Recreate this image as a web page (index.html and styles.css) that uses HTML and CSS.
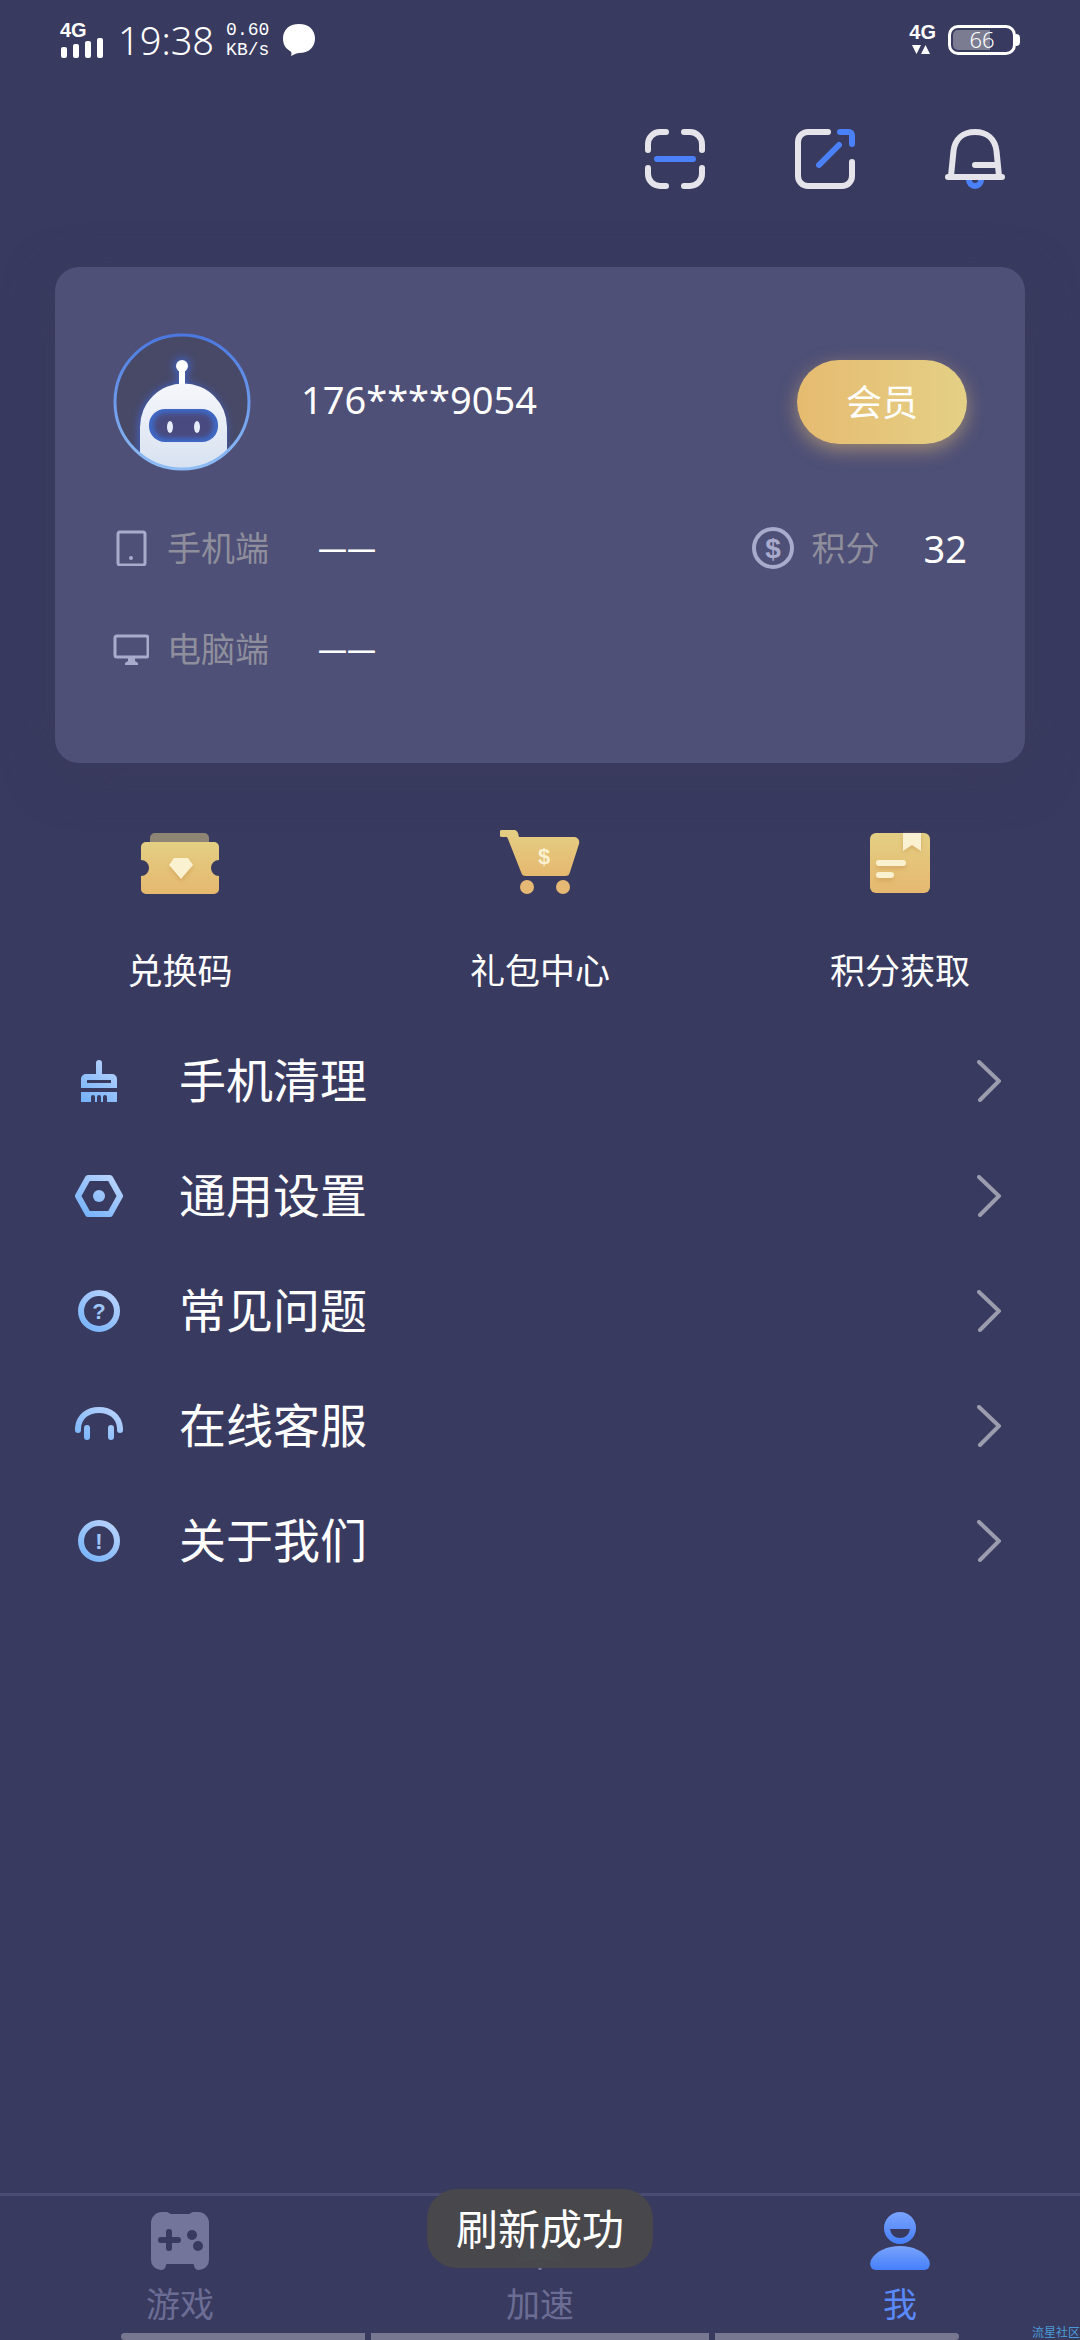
FILE: index.html
```html
<!DOCTYPE html>
<html lang="zh-CN">
<head>
<meta charset="utf-8">
<meta name="viewport" content="width=device-width, initial-scale=1">
<title>我</title>
<link rel="stylesheet" href="styles.css">
</head>
<body>
<svg class="defs" aria-hidden="true">
  <defs>
    <linearGradient id="gold" x1="0" y1="0" x2="0" y2="1"><stop offset="0" stop-color="#e3cf83"/><stop offset="1" stop-color="#e6b86f"/></linearGradient>
    <linearGradient id="sky" gradientUnits="userSpaceOnUse" x1="38" y1="4" x2="10" y2="44"><stop offset="0" stop-color="#b9d3fc"/><stop offset="1" stop-color="#76b3fb"/></linearGradient>
    <linearGradient id="ring" x1="0" y1="0" x2="0" y2="1"><stop offset="0" stop-color="#4a78e0"/><stop offset="1" stop-color="#8fbdf5"/></linearGradient>
    <linearGradient id="shell" x1="0" y1="0" x2="0" y2="1"><stop offset="0" stop-color="#f6f7fb"/><stop offset="1" stop-color="#d5e0f0"/></linearGradient>
    <linearGradient id="person" x1="0" y1="0" x2="0" y2="1"><stop offset="0" stop-color="#7aa3fb"/><stop offset="1" stop-color="#457ffc"/></linearGradient>
    <filter id="glow" x="-30%" y="-30%" width="160%" height="160%"><feGaussianBlur stdDeviation="4"/></filter>
    <filter id="soft" x="-30%" y="-30%" width="160%" height="160%"><feGaussianBlur stdDeviation="2"/></filter>
    <clipPath id="avatar-clip"><circle cx="69" cy="69" r="68"/></clipPath>
  </defs>
</svg>

<header class="status">
  <div class="signal">
    <span class="net">4G</span>
    <svg width="44" height="20" viewBox="0 0 44 20" fill="#fff"><rect x="1" y="9" width="6" height="11" rx="2"/><rect x="13" y="6" width="6" height="14" rx="2"/><rect x="25" y="3" width="6" height="17" rx="2"/><rect x="37" y="0" width="6" height="20" rx="2"/></svg>
  </div>
  <time class="clock">19:38</time>
  <div class="speed"><span>0.60</span><span>KB/s</span></div>
  <svg width="34" height="34" viewBox="0 0 34 34"><path fill="#fff" d="M17 1C27 1 33 7 33 15.500S27 30 17 30c-2 0-4 1-8 3 1-3 .5-4-1-5C3 25 1 21 1 15.500 1 7 7 1 17 1z"/></svg>
  <div class="status-right">
    <div class="signal">
      <span class="net">4G</span>
      <svg class="arrows" width="24" height="14" viewBox="0 0 24 14" fill="#fff"><path d="M3 2h9l-4.500 9zM12 11h9l-4.500-9z"/></svg>
    </div>
    <div class="battery"><span>66</span></div>
  </div>
</header>

<div class="toolbar">
  <button class="tool" aria-label="扫一扫">
    <svg width="60" height="60" viewBox="0 0 60 60" fill="none" stroke="#e4e4ea" stroke-width="6" stroke-linecap="round"><path d="M3 21v-6A12 12 0 0 1 15 3h6M39 3h6a12 12 0 0 1 12 12v6M57 39v6a12 12 0 0 1-12 12h-6M21 57h-6A12 12 0 0 1 3 45v-6"/><path stroke="#4a80f8" d="M12 30h36"/></svg>
  </button>
  <button class="tool" aria-label="分享">
    <svg width="60" height="60" viewBox="0 0 60 60" fill="none" stroke="#e4e4ea" stroke-width="6" stroke-linecap="round"><path d="M33 3H13A10 10 0 0 0 3 13v34a10 10 0 0 0 10 10h34a10 10 0 0 0 10-10V33"/><path stroke="#4a80f8" d="M45 3h9a3 3 0 0 1 3 3v9M24 36l20-20"/></svg>
  </button>
  <button class="tool" aria-label="消息">
    <svg width="60" height="60" viewBox="0 0 60 60" fill="none" stroke="#e4e4ea" stroke-width="6" stroke-linecap="round"><path stroke="#4a80f8" d="M24 51a6 6 0 0 0 12 0"/><path d="M3 48h54M6 47L8.500 22C10 10 18 3 30 3s20 7 21.500 19L54 47M30 36h20"/></svg>
  </button>
</div>

<main>
  <section class="card">
    <div class="profile">
      <svg class="avatar" width="138" height="138" viewBox="0 0 138 138">
        <circle cx="69" cy="69" r="68" fill="#484867"/>
        <g clip-path="url(#avatar-clip)">
          <g fill="#3f64c8" filter="url(#glow)"><circle cx="69" cy="33" r="8"/><path d="M65 34h8v20h-8z"/><path d="M26 142V95a43 44 0 0 1 87 0v47z"/></g>
          <circle cx="69" cy="33" r="6" fill="#fff"/><path d="M66 36h6v18h-6z" fill="#fff"/>
          <path d="M27 142V94a43 43 0 0 1 87 0v48z" fill="url(#shell)"/>
          <rect x="36" y="76" width="69" height="33" rx="16" fill="#3e68c6"/>
          <rect x="41" y="80" width="59" height="25" rx="12" fill="#484c80" filter="url(#soft)"/>
          <ellipse cx="57" cy="94" rx="3" ry="6" fill="#e6ecf8"/><ellipse cx="84" cy="94" rx="3" ry="6" fill="#e6ecf8"/>
        </g>
        <circle cx="69" cy="69" r="67" fill="none" stroke="url(#ring)" stroke-width="3"/>
      </svg>
      <span class="phone">176****9054</span>
      <button class="member">会员</button>
    </div>
    <div class="info">
      <svg width="36" height="36" viewBox="0 0 36 36" fill="none" stroke="#a9abcd" stroke-width="3"><rect x="5" y="2" width="27" height="33" rx="2"/><circle cx="18" cy="28" r="2" fill="#a9abcd" stroke="none"/></svg>
      <span class="label">手机端</span>
      <span class="dash">——</span>
      <div class="points">
        <svg width="42" height="42" viewBox="0 0 42 42"><circle cx="21" cy="21" r="19" fill="none" stroke="#a9abcd" stroke-width="4"/><text class="coin" x="21" y="31">$</text></svg>
        <span class="label">积分</span>
        <span class="value">32</span>
      </div>
    </div>
    <div class="info">
      <svg width="36" height="36" viewBox="0 0 36 36"><rect x="2" y="5" width="33" height="21" rx="2" fill="none" stroke="#a9abcd" stroke-width="3"/><path fill="#a9abcd" d="M15 27h7v3l3 2v2H12v-2l3-2z"/></svg>
      <span class="label">电脑端</span>
      <span class="dash">——</span>
    </div>
  </section>

  <section class="quick">
    <button class="quick-item">
      <svg width="80" height="64" viewBox="0 0 80 64"><path d="M10 13V8a5 5 0 0 1 5-5h49a5 5 0 0 1 5 5v5z" fill="#8f8575"/><path fill="url(#gold)" d="M6 12h68a5 5 0 0 1 5 5v13a8 8 0 0 0 0 16v13a5 5 0 0 1-5 5H6a5 5 0 0 1-5-5V46a8 8 0 0 0 0-16V17a5 5 0 0 1 5-5z"/><path d="M34 31h14l5 7-12 14-12-14z" fill="#cf9c56" opacity=".6" filter="url(#soft)"/><path d="M34 28h14l5 7-12 14-12-14z" fill="#faf1d0"/></svg>
      <span>兑换码</span>
    </button>
    <button class="quick-item">
      <svg width="80" height="64" viewBox="0 0 80 64"><path fill="url(#gold)" d="M2 0h12c3 0 4 2 5 7h54c5 0 7 3 6 7l-9 28c-1 3-2 4-5 4H26c-3 0-4-1-5-4L8 9 7 7H2a3 3 0 0 1 0-7z"/><circle cx="27" cy="57" r="7" fill="#e5b873"/><circle cx="63" cy="57" r="7" fill="#e5b873"/><text class="cart-mark" x="44" y="34">$</text></svg>
      <span>礼包中心</span>
    </button>
    <button class="quick-item">
      <svg width="80" height="64" viewBox="0 0 80 64"><rect x="10" y="3" width="60" height="60" rx="6" fill="url(#gold)"/><g fill="#cf9c56" opacity=".6" filter="url(#soft)"><path d="M43 4h18v19l-9-6-9 6z"/><rect x="16" y="33" width="30" height="6" rx="3"/><rect x="16" y="45" width="18" height="6" rx="3"/></g><g fill="#faf1d0"><path d="M43 3h18v18l-9-6-9 6z"/><rect x="16" y="30" width="30" height="6" rx="3"/><rect x="16" y="42" width="18" height="6" rx="3"/></g></svg>
      <span>积分获取</span>
    </button>
  </section>

  <nav class="menu">
    <a class="row" href="#clean">
      <svg width="48" height="48" viewBox="0 0 48 48"><path fill="url(#sky)" fill-rule="evenodd" d="M21 6a3 3 0 0 1 6 0v11h10a5 5 0 0 1 5 5v9H6v-9a5 5 0 0 1 5-5h10zM12 23v3h24v-3zM6 35h36v10H32v-5a2 2 0 0 0-4 0v5h-2v-5a2 2 0 0 0-4 0v5h-2v-5a2 2 0 0 0-4 0v5H6z"/></svg>
      <span>手机清理</span>
      <svg class="chevron" width="24" height="42" viewBox="0 0 24 42"><path d="M2 2l20 19L3 40"/></svg>
    </a>
    <a class="row" href="#settings">
      <svg width="48" height="48" viewBox="0 0 48 48"><path fill="none" stroke="url(#sky)" stroke-width="6" stroke-linejoin="round" d="M13 6h22l10 18-10 18H13L3 24z"/><circle cx="24" cy="24" r="6" fill="url(#sky)"/></svg>
      <span>通用设置</span>
      <svg class="chevron" width="24" height="42" viewBox="0 0 24 42"><path d="M2 2l20 19L3 40"/></svg>
    </a>
    <a class="row" href="#faq">
      <svg width="48" height="48" viewBox="0 0 48 48"><circle cx="24" cy="24" r="18" fill="none" stroke="url(#sky)" stroke-width="6"/><text class="mark" x="24" y="32">?</text></svg>
      <span>常见问题</span>
      <svg class="chevron" width="24" height="42" viewBox="0 0 24 42"><path d="M2 2l20 19L3 40"/></svg>
    </a>
    <a class="row" href="#service">
      <svg width="48" height="48" viewBox="0 0 48 48"><path fill="none" stroke="url(#sky)" stroke-width="6" stroke-linecap="round" d="M3 28v-2C4 14 13 8 24 8s20 6 21 18v2M12 26v9M36 26v9"/></svg>
      <span>在线客服</span>
      <svg class="chevron" width="24" height="42" viewBox="0 0 24 42"><path d="M2 2l20 19L3 40"/></svg>
    </a>
    <a class="row" href="#about">
      <svg width="48" height="48" viewBox="0 0 48 48"><circle cx="24" cy="24" r="18" fill="none" stroke="url(#sky)" stroke-width="6"/><text class="mark" x="24" y="32">!</text></svg>
      <span>关于我们</span>
      <svg class="chevron" width="24" height="42" viewBox="0 0 24 42"><path d="M2 2l20 19L3 40"/></svg>
    </a>
  </nav>
</main>

<footer class="bottom">
  <nav class="tabs">
    <a class="tab" href="#games">
      <svg width="60" height="58" viewBox="0 0 60 58"><path fill="#73759a" d="M12 0h4c3 0 3 2 6 2h16c3 0 3-2 6-2h4a11 11 0 0 1 11 11v37a10 10 0 0 1-10 10c-6 0-4-6-6-6H17c-2 0 0 6-6 6A10 10 0 0 1 1 48V11A11 11 0 0 1 12 0z"/><g fill="#393a5f"><path d="M19 17a3 3 0 0 1 3 3v5h6a3 3 0 0 1 0 6h-6v5a3 3 0 0 1-6 0v-5h-5a3 3 0 0 1 0-6h5v-5a3 3 0 0 1 3-3z"/><circle cx="42" cy="23" r="5"/><circle cx="48" cy="34" r="5"/></g></svg>
      <span>游戏</span>
    </a>
    <a class="tab" href="#boost">
      <svg width="60" height="58" viewBox="0 0 60 58"><path fill="#73759a" d="M30 0c12 5 17 17 14 30l6 13c2 5 3 7-2 7l-10-2H22l-10 2c-5 0-4-2-2-7l6-13C13 17 18 5 30 0zM25 51h10l-4 7h-2z"/><circle cx="30" cy="21" r="6" fill="#393a5f"/></svg>
      <span>加速</span>
    </a>
    <a class="tab active" href="#me" aria-current="page">
      <svg width="60" height="58" viewBox="0 0 60 58"><g fill="url(#person)"><path fill-rule="evenodd" d="M30 0a16 16 0 0 1 0 32a16 16 0 0 1 0-32zM20 17c1 6 5 9 10 9s9-3 10-9z"/><path d="M6 58c-5 0-7-5-5-10 5-9 16-14 29-14s24 5 29 14c2 5 0 10-5 10z"/></g></svg>
      <span>我</span>
    </a>
  </nav>
  <div class="gesture"><i></i><i></i><i></i></div>
  <div class="toast" role="status">刷新成功</div>
  <span class="watermark">流星社区</span>
</footer>
</body>
</html>
```

FILE: styles.css
```css
* {
  box-sizing: border-box;
}

body {
  margin: 0;
  min-height: 100vh;
  display: flex;
  flex-direction: column;
  background: #393a5f;
  color: #fff;
  font-family: "Noto Sans", "Noto Sans CJK SC", sans-serif;
}

button {
  padding: 0;
  border: 0;
  background: none;
  color: inherit;
  font: inherit;
  cursor: pointer;
}

a {
  color: inherit;
  text-decoration: none;
}

svg {
  display: block;
  flex: none;
}

.defs {
  position: absolute;
  width: 0;
  height: 0;
}

/* status bar */
.status {
  display: flex;
  align-items: center;
  height: 80px;
  padding: 0 64px 0 60px;
}

.signal {
  display: flex;
  flex-direction: column;
}

.net {
  font: bold 20px/16px "Liberation Sans", sans-serif;
}

.arrows {
  margin-top: 3px;
}

.clock {
  margin: 0 12px 0 14px;
  font-size: 38px;
  font-weight: 300;
  line-height: 48px;
}

.speed {
  display: flex;
  flex-direction: column;
  margin-right: 13px;
  font: 18px/20px "Liberation Mono", monospace;
}

.status-right {
  display: flex;
  align-items: center;
  gap: 12px;
  margin-left: auto;
}

.battery {
  position: relative;
  width: 68px;
  height: 30px;
  padding: 2px;
  border: 3px solid #fff;
  border-radius: 10px;
  background: linear-gradient(90deg, #7b7b91 64%, transparent 64%) content-box;
  font-size: 22px;
  font-weight: 300;
  line-height: 18px;
  text-align: center;
}

.battery::after {
  content: "";
  position: absolute;
  top: 6px;
  right: -7px;
  width: 4px;
  height: 12px;
  border-radius: 0 4px 4px 0;
  background: #fff;
}

.toolbar {
  display: flex;
  justify-content: flex-end;
  gap: 90px;
  padding: 49px 75px 78px;
}

/* account card */
.card {
  display: flex;
  flex-direction: column;
  gap: 53px;
  margin: 0 55px;
  padding: 66px 58px 90px;
  border-radius: 24px;
  background: #4f5077;
  box-shadow: 0 12px 48px #3a3b5d;
}

.profile {
  display: flex;
  align-items: center;
}

.phone {
  margin-left: 50px;
  padding-bottom: 6px;
  font-size: 38px;
  line-height: 48px;
}

.member {
  width: 170px;
  height: 84px;
  margin-left: auto;
  padding-bottom: 4px;
  border-radius: 42px;
  background: linear-gradient(90deg, #e6bb70, #e4d086);
  box-shadow: 0 6px 18px rgba(230, 190, 115, 0.5);
  font-size: 36px;
}

.info {
  display: flex;
  align-items: center;
  height: 48px;
}

.label {
  margin-left: 18px;
  color: #8e8e9c;
  font-size: 34px;
  line-height: 48px;
}

.dash {
  margin-left: 49px;
  font-size: 29px;
  font-weight: 500;
  line-height: 48px;
}

.points {
  display: flex;
  align-items: center;
  margin-left: auto;
}

.value {
  margin-left: 44px;
  font-size: 38px;
  line-height: 48px;
}

.coin,
.cart-mark,
.mark {
  font-family: "Liberation Sans", sans-serif;
  text-anchor: middle;
}

.coin {
  fill: #a9abcd;
  font-size: 28px;
  font-weight: bold;
}

.cart-mark {
  fill: #faf1d0;
  font-size: 22px;
  font-weight: bold;
}

.mark {
  fill: #9fc5fb;
  font-size: 22px;
  font-weight: bold;
}

/* shortcuts */
.quick {
  display: grid;
  grid-template-columns: repeat(3, 1fr);
  padding: 67px 0 28px;
}

.quick-item {
  display: flex;
  flex-direction: column;
  align-items: center;
  gap: 53px;
  font-size: 35px;
  line-height: 48px;
}

/* menu list */
.row {
  display: flex;
  align-items: center;
  height: 115px;
  padding: 0 79px 0 75px;
  font-size: 47px;
}

.row span {
  margin-left: 56px;
  padding-bottom: 6px;
}

.chevron {
  margin-left: auto;
  fill: none;
  stroke: #9b9cae;
  stroke-width: 4;
  stroke-linecap: round;
}

/* bottom tabs */
.bottom {
  position: relative;
  margin-top: auto;
  border-top: 3px solid #4b4c73;
}

.tabs {
  display: grid;
  grid-template-columns: repeat(3, 1fr);
  padding: 16px 0 9px;
}

.tab {
  display: flex;
  flex-direction: column;
  align-items: center;
  gap: 14px;
  color: #6b6d94;
  font-size: 34px;
  line-height: 40px;
}

.tab.active {
  color: #5a8afb;
}

.gesture {
  display: grid;
  grid-template-columns: 244fr 338fr 244fr;
  gap: 6px;
  height: 7px;
  padding: 0 121px;
}

.gesture i {
  background: #777792;
}

.gesture i:first-child {
  border-radius: 4px 0 0 4px;
}

.gesture i:last-child {
  border-radius: 0 4px 4px 0;
}

.toast {
  position: absolute;
  top: -7px;
  left: 50%;
  transform: translateX(-50%);
  padding: 0 29px;
  border-radius: 30px;
  background: rgba(72, 72, 75, 0.96);
  font-size: 42px;
  line-height: 79px;
  white-space: nowrap;
}

.watermark {
  position: absolute;
  right: 0;
  bottom: 0;
  color: #4a9ad8;
  font-size: 12px;
  line-height: 14px;
}
```
